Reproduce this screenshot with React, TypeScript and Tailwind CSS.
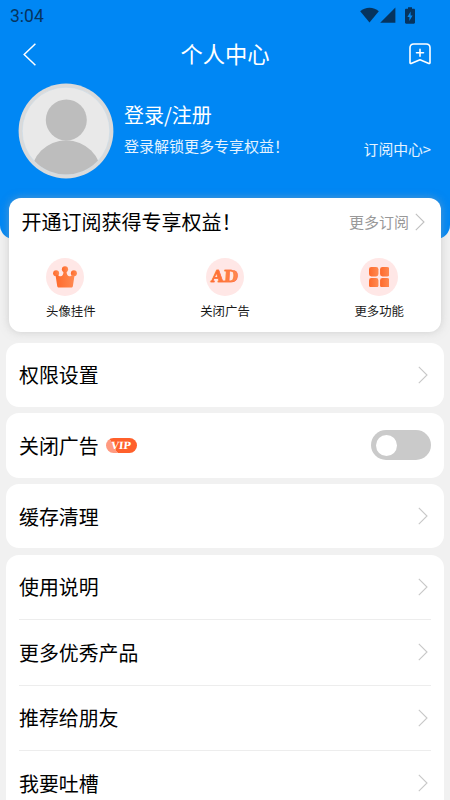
import { useState } from 'react';
import type { ReactNode } from 'react';
import clsx from 'clsx';

const MENU_ITEMS = ['使用说明', '更多优秀产品', '推荐给朋友', '我要吐槽'];

function Chevron({ className }: { className?: string }) {
  return (
    <svg viewBox="0 0 10 18" className={clsx('h-[18px] w-[10px] shrink-0', className)} fill="none" stroke="currentColor" strokeWidth="1.1">
      <path d="M.8.8 9 9 .8 17.2" />
    </svg>
  );
}

function StatusBar() {
  return (
    <div className="flex h-8 items-center justify-between pl-[10px] pr-[35px] text-[#06345f]">
      <span className="pt-px font-['Roboto',sans-serif] text-[17.5px] leading-none">3:04</span>
      <div className="flex items-center pb-[2px]">
        <svg viewBox="0 0 19 16" className="h-4 w-[19px]" fill="currentColor">
          <path d="M9.5 15.6.2 4.2C5-.5 14-.5 18.8 4.2z" />
        </svg>
        <svg viewBox="0 0 16 16" className="ml-[1.5px] h-4 w-4" fill="currentColor">
          <path d="M15.4.5v15.2H.2z" />
        </svg>
        <svg viewBox="0 0 10 17" className="ml-[9px] h-[17px] w-[10px]" fill="currentColor">
          <path
            fillRule="evenodd"
            d="M3 .3h4v1.5h1.8c.7 0 1.2.5 1.2 1.2v12.5c0 .7-.5 1.2-1.2 1.2H1.2c-.7 0-1.2-.5-1.2-1.2V3c0-.7.5-1.2 1.2-1.2H3zM5.6 4.5 2.4 10h2v4l3.2-5.6h-2z"
          />
        </svg>
      </div>
    </div>
  );
}

function Avatar() {
  return (
    <svg viewBox="0 0 96 96" className="size-24 shrink-0">
      <defs>
        <clipPath id="avatar-clip">
          <circle cx="48" cy="48" r="43.6" />
        </clipPath>
      </defs>
      <circle cx="48" cy="48" r="47.4" fill="#dadada" />
      <circle cx="48" cy="48" r="43.8" fill="#e9e9e9" stroke="#c9dbea" strokeWidth=".6" />
      <g clipPath="url(#avatar-clip)" fill="#bdbdbd">
        <circle cx="48.3" cy="37" r="20.5" />
        <circle cx="48.2" cy="92.5" r="35.3" />
      </g>
    </svg>
  );
}

function OrangeGradient({ id }: { id: string }) {
  return (
    <defs>
      <linearGradient id={id} x1="0" y1="0" x2="1" y2="0">
        <stop offset="0" stopColor="#ff6a2b" />
        <stop offset="1" stopColor="#ff8a52" />
      </linearGradient>
    </defs>
  );
}

function CrownIcon() {
  return (
    <svg viewBox="0 0 24 22" className="h-[22px] w-6" fill="url(#crown)">
      <OrangeGradient id="crown" />
      <circle cx="12" cy="3.3" r="3.1" />
      <circle cx="3.1" cy="7.2" r="3" />
      <circle cx="20.9" cy="7.2" r="3" />
      <path d="M10.6 5h2.800c.1 3.600 1.500 5.200 3.100 5.200 1.300 0 2.400-.6 3-1.800l2 1.200-1.600 10.300c-.2 1.100-.8 1.700-1.800 1.700H6c-1 0-1.600-.6-1.800-1.700L2.600 9.600l2-1.200c.6 1.200 1.700 1.800 3 1.800 1.800 0 2.900-1.600 3-5.200z" />
    </svg>
  );
}

function GridIcon() {
  return (
    <svg viewBox="0 0 20 20" className="size-[20.5px]" fill="url(#grid)">
      <OrangeGradient id="grid" />
      <rect width="9.2" height="9.2" rx="2.3" />
      <rect x="10.8" width="9.2" height="9.2" rx="2.3" />
      <rect y="10.8" width="9.2" height="9.2" rx="2.3" />
      <rect x="10.8" y="10.8" width="9.2" height="9.2" rx="2.3" />
    </svg>
  );
}

function Benefit({ icon, label, className }: { icon: ReactNode; label: string; className?: string }) {
  return (
    <div className={clsx('flex flex-col', className)}>
      <div className="flex size-[37.5px] items-center justify-center rounded-full bg-[#ffe7e6]">{icon}</div>
      <span className="mt-[7px] text-[12.4px] leading-[16px] text-[#1a1a1a]">{label}</span>
    </div>
  );
}

function Row({ label, badge, children }: { label: string; badge?: ReactNode; children?: ReactNode }) {
  return (
    <div className="flex h-[64.5px] items-center justify-between pl-[13px] pr-[13px]">
      <div className="flex items-center gap-[7px] pt-px text-[19.9px] leading-none text-black">
        <span>{label}</span>
        {badge}
      </div>
      {children ?? <Chevron className="mr-[3px] text-[#c8c8c8]" />}
    </div>
  );
}

function VipBadge() {
  return (
    <span className="flex h-[15px] w-[31px] items-center justify-center rounded-full bg-linear-60 from-[#ff9a80] from-30% to-[#ff602b] to-30% font-['DejaVu_Serif',serif] text-[10px] font-bold leading-none text-white">
      <span className="-skew-x-6">VIP</span>
    </span>
  );
}

export default function App() {
  const [adsOff, setAdsOff] = useState(false);

  return (
    <div className="h-[800px] w-[450px] overflow-hidden bg-[#f1f1f1] font-['Noto_Sans_CJK_SC',sans-serif]">
      <header className="h-[239px] rounded-b-[14px] bg-[#0087f4] text-white">
        <StatusBar />

        <div className="flex h-11 items-center justify-between pl-[23px] pr-[19px]">
          <svg viewBox="0 0 13 23" className="h-[23px] w-[13px]" fill="none" stroke="currentColor" strokeWidth="1.5">
            <path d="M12.4.8 1.2 11.5l11.2 10.7" />
          </svg>
          <h1 className="pb-[2px] pl-[5px] text-[22.3px] leading-none">个人中心</h1>
          <svg viewBox="0 0 22 22" className="size-[22px]" fill="none" stroke="currentColor" strokeWidth="1.6" strokeLinecap="round" strokeLinejoin="round">
            <path d="M4.8 1h12.4C19.7 1 21 2.3 21 4.8v14.9c0 .7-.5 1-1.1.7L11 16.800l-8.900 3.600c-.6.3-1.100 0-1.100-.7V4.800C1 2.300 2.300 1 4.800 1zM11 6.200v7M7.500 9.700h7" />
          </svg>
        </div>

        <div className="mt-[7px] flex pl-[18px] pr-[19px]">
          <Avatar />
          <div className="ml-[10px] flex flex-1 flex-col pt-[20px]">
            <span className="text-[20px] leading-[24px]">登录/注册</span>
            <span className="mt-[9px] text-[15px] leading-[20px] text-white/90">登录解锁更多专享权益！</span>
          </div>
          <span className="mt-[56px] text-[14.8px] leading-[20px] text-white/90">订阅中心&gt;</span>
        </div>
      </header>

      <main className="relative -mt-[41.5px]">
        <section className="mx-[9px] h-[134.5px] rounded-xl bg-white shadow-[0_0_8px_rgba(170,170,170,0.5)]">
          <div className="flex items-center justify-between pl-[12.5px] pr-[16px] pt-[11px]">
            <h2 className="text-[20px] leading-[26px] text-black">开通订阅获得专享权益！</h2>
            <div className="flex items-center gap-[6px] text-[15px] leading-[26px] text-[#999]">
              更多订阅
              <Chevron className="text-[#c0c0c0]" />
            </div>
          </div>
          <div className="mt-[23.5px] flex justify-between px-[37px]">
            <Benefit label="头像挂件" icon={<CrownIcon />} className="items-start" />
            <Benefit
              label="关闭广告"
              icon={
                <span className="-skew-x-3 bg-linear-to-r from-[#ff6a2b] to-[#ff8a52] bg-clip-text font-['DejaVu_Serif',serif] text-[16.5px] font-bold leading-none text-transparent [-webkit-text-stroke:0.6px_#ff7438]">
                  AD
                </span>
              }
              className="items-center"
            />
            <Benefit label="更多功能" icon={<GridIcon />} className="items-center" />
          </div>
        </section>

        <div className="mx-[6px] mt-[10.5px] flex flex-col gap-[6.2px]">
          <section className="rounded-[13px] bg-white">
            <Row label="权限设置" />
          </section>
          <section className="rounded-[13px] bg-white">
            <Row label="关闭广告" badge={<VipBadge />}>
              <button
                role="switch"
                aria-checked={adsOff}
                aria-label="关闭广告"
                onClick={() => setAdsOff((v) => !v)}
                className={clsx(
                  'flex h-[30px] w-[60px] items-center rounded-full px-[5px] transition-colors',
                  adsOff ? 'justify-end bg-[#0087f4]' : 'bg-[#cacaca]',
                )}
              >
                <span className="size-[20.5px] rounded-full bg-white" />
              </button>
            </Row>
          </section>
          <section className="rounded-[13px] bg-white">
            <Row label="缓存清理" />
          </section>
          <section className="rounded-t-[13px] bg-white">
            {MENU_ITEMS.map((label, i) => (
              <div key={label}>
                {i > 0 && <div className="mx-[13px] h-px bg-[#ededed]" />}
                <Row label={label} />
              </div>
            ))}
          </section>
        </div>
      </main>
    </div>
  );
}
